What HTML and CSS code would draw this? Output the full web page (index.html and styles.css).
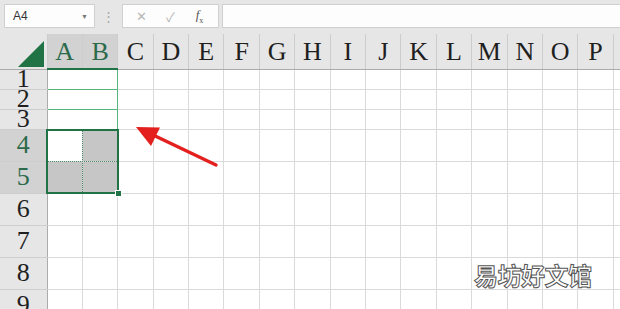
FILE: index.html
```html
<!DOCTYPE html>
<html lang="zh-CN">
    <head>
        <meta charset="UTF-8" />
        <title>Hoja de cálculo</title>
        <link rel="stylesheet" href="styles.css">
    </head>
    <body>
        <!-- BARRA DE FÓRMULAS -->
        <div class="barra">
            <div class="nombre">
                <span>A4</span>
                <span class="flecha">&#9660;</span>
            </div>
            <span class="puntos">&#8942;</span>
            <div class="botones">
                <span class="btn">&#10005;</span>
                <span class="btn">&#10003;</span>
                <span class="btn fx"><i>f</i><sub>x</sub></span>
            </div>
            <div class="formula"></div>
        </div>

        <!-- HOJA -->
        <div class="hoja">
            <table class="tabla">
                <colgroup>
                    <col class="col-num">
                    <col span="17" class="col-celda">
                </colgroup>
                <thead>
                    <tr>
                        <th class="esquina"><span class="triangulo"></span></th>
                        <th class="sel">A</th><th class="sel">B</th><th>C</th><th>D</th><th>E</th><th>F</th><th>G</th><th>H</th>
                        <th>I</th><th>J</th><th>K</th><th>L</th><th>M</th><th>N</th><th>O</th><th>P</th><th>Q</th>
                    </tr>
                </thead>
                <tbody>
                    <tr class="bajo">
                        <th>1</th><td colspan="2" class="verde"></td>
                        <td></td><td></td><td></td><td></td><td></td><td></td><td></td><td></td><td></td><td></td><td></td><td></td><td></td><td></td><td></td>
                    </tr>
                    <tr class="bajo">
                        <th>2</th><td colspan="2" class="verde"></td>
                        <td></td><td></td><td></td><td></td><td></td><td></td><td></td><td></td><td></td><td></td><td></td><td></td><td></td><td></td><td></td>
                    </tr>
                    <tr class="bajo">
                        <th>3</th><td colspan="2" class="verde"></td>
                        <td></td><td></td><td></td><td></td><td></td><td></td><td></td><td></td><td></td><td></td><td></td><td></td><td></td><td></td><td></td>
                    </tr>
                    <tr>
                        <th class="sel">4</th><td></td><td class="gris"></td>
                        <td></td><td></td><td></td><td></td><td></td><td></td><td></td><td></td><td></td><td></td><td></td><td></td><td></td><td></td><td></td>
                    </tr>
                    <tr>
                        <th class="sel">5</th><td class="gris"></td><td class="gris"></td>
                        <td></td><td></td><td></td><td></td><td></td><td></td><td></td><td></td><td></td><td></td><td></td><td></td><td></td><td></td><td></td>
                    </tr>
                    <tr>
                        <th>6</th><td></td><td></td>
                        <td></td><td></td><td></td><td></td><td></td><td></td><td></td><td></td><td></td><td></td><td></td><td></td><td></td><td></td><td></td>
                    </tr>
                    <tr>
                        <th>7</th><td></td><td></td>
                        <td></td><td></td><td></td><td></td><td></td><td></td><td></td><td></td><td></td><td></td><td></td><td></td><td></td><td></td><td></td>
                    </tr>
                    <tr>
                        <th>8</th><td></td><td></td>
                        <td></td><td></td><td></td><td></td><td></td><td></td><td></td><td></td><td></td><td></td><td></td><td></td><td></td><td></td><td></td>
                    </tr>
                    <tr>
                        <th>9</th><td></td><td></td>
                        <td></td><td></td><td></td><td></td><td></td><td></td><td></td><td></td><td></td><td></td><td></td><td></td><td></td><td></td><td></td>
                    </tr>
                </tbody>
            </table>

            <!-- rango seleccionado A4:B5 -->
            <div class="seleccion">
                <span class="linea-v"></span>
                <span class="linea-h"></span>
                <span class="controlador"></span>
            </div>

            <svg class="flecha-roja" width="90" height="55" viewBox="0 0 90 55">
                <line x1="83" y1="46" x2="18" y2="15" stroke="#e3201d" stroke-width="3.4" stroke-linecap="round" />
                <polygon points="3,8 27,8.5 18,27" fill="#e3201d" />
            </svg>

            <div class="marca">易坊好文馆</div>
        </div>
    </body>
</html>
```

FILE: styles.css
```css
/* HOJA DE CÁLCULO */
* {
    box-sizing: border-box;
    margin: 0;
    padding: 0;
}

body {
    width: 620px;
    height: 309px;
    overflow: hidden;
    background: #e6e6e6;
    font-family: "Liberation Sans", Arial, sans-serif;
}

/* barra de fórmulas */
.barra {
    display: flex;
    align-items: center;
    height: 34px;
    padding: 0 0 2px 4px;
}

.nombre {
    display: flex;
    align-items: center;
    justify-content: space-between;
    width: 91px;
    height: 24px;
    padding: 0 6px 0 8px;
    font-size: 12px;
    color: #333;
    background: #fdfdfd;
    border: 1px solid #d0d0d0;
}

.flecha {
    font-size: 7px;
    color: #777;
}

.puntos {
    width: 27px;
    font-size: 13px;
    text-align: center;
    color: #aaa;
}

.botones {
    display: flex;
    align-items: center;
    justify-content: space-around;
    width: 97px;
    height: 24px;
    padding: 0 4px;
    background: #fdfdfd;
    border: 1px solid #d0d0d0;
}

.btn {
    width: 24px;
    font-size: 13px;
    text-align: center;
    color: #b8b8b8;
}

.fx {
    font-family: "Liberation Serif", serif;
    font-size: 13px;
    color: #555;
}

.fx sub {
    font-size: 8px;
}

.formula {
    flex: 1;
    height: 24px;
    margin-left: 3px;
    background: #fdfdfd;
    border: 1px solid #d0d0d0;
    border-right: none;
}

/* tabla */
.hoja {
    position: relative;
}

.tabla {
    width: 649px;
    table-layout: fixed;
    border-collapse: collapse;
    background: #fff;
}

.col-num {
    width: 47px;
}

.col-celda {
    width: 35.4px;
}

th {
    font-family: "Liberation Serif", "Times New Roman", serif;
    font-size: 26px;
    font-weight: normal;
    color: #1f1f1f;
    background: #e6e6e6;
    border: 1px solid #cdcdcd;
}

thead th {
    height: 35px;
    padding-top: 2px;
    border-top: none;
    border-bottom: 1px solid #ababab;
}

tbody th {
    border-left: none;
    border-right: 1px solid #ababab;
}

th.sel {
    color: #2b6a4a;
    background: #d2d2d2;
}

thead th.sel {
    border-bottom: 2px solid #217346;
}

.esquina {
    position: relative;
    border-left: none;
}

.triangulo {
    position: absolute;
    right: 3px;
    bottom: 2px;
    width: 0;
    height: 0;
    border-left: 26px solid transparent;
    border-bottom: 26px solid #217346;
}

td {
    height: 32px;
    border: 1px solid #dadada;
}

tr.bajo td,
tr.bajo th {
    height: 20px;
    line-height: 18px;
    overflow: hidden;
}

td.verde {
    border: 1px solid #57b47a;
}

td.gris {
    background: #c6c6c6;
}

/* selección A4:B5 */
.seleccion {
    position: absolute;
    left: 46px;
    top: 95px;
    width: 73px;
    height: 65px;
    border: 2px solid #217346;
}

.linea-v {
    position: absolute;
    left: 34px;
    top: 0;
    bottom: 0;
    border-left: 1px dotted #4f8a68;
}

.linea-h {
    position: absolute;
    left: 0;
    right: 0;
    top: 30px;
    border-top: 1px dotted #4f8a68;
}

.controlador {
    position: absolute;
    right: -5px;
    bottom: -5px;
    width: 7px;
    height: 7px;
    background: #217346;
    border: 1px solid #fff;
}

.flecha-roja {
    position: absolute;
    left: 133px;
    top: 85px;
}

.marca {
    position: absolute;
    left: 474px;
    top: 223px;
    font-family: "Noto Sans CJK SC", sans-serif;
    font-size: 24px;
    font-weight: bold;
    letter-spacing: -0.5px;
    color: #fff;
    -webkit-text-stroke: 1px #555;
}
```
